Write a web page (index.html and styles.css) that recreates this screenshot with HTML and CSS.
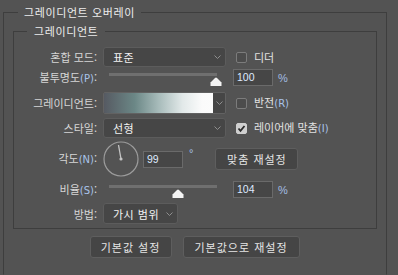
FILE: index.html
```html
<!DOCTYPE html>
<html lang="ko">
<head>
<meta charset="utf-8">
<link rel="stylesheet" href="styles.css">
</head>
<body>
<fieldset class="outer">
  <legend>그레이디언트 오버레이</legend>
  <fieldset class="inner">
    <legend>그레이디언트</legend>

    <div class="row r1">
      <span class="lbl">혼합 모드:</span>
      <div class="select w123"><span class="val">표준</span><svg class="chev" width="7" height="4" viewBox="0 0 7 4"><polyline points="0.5,0.5 3.5,3.5 6.5,0.5" fill="none" stroke="#8e8e8e" stroke-width="1"/></svg></div>
      <span class="check"></span><span class="opt">디더</span>
    </div>

    <div class="row r2">
      <span class="lbl">불투명도<span class="key">(P)</span>:</span>
      <div class="slider"><div class="track"></div><svg class="thumb t100" width="12" height="9" viewBox="0 0 12 9"><path d="M0.5 9 V5.5 L5 1 Q6 0 7 1 L11.5 5.5 V9 Z" fill="#f4f4f4"/></svg></div>
      <div class="num">100</div><span class="unit">%</span>
    </div>

    <div class="row r3">
      <span class="lbl">그레이디언트:</span>
      <div class="grad"><div class="swatch"></div><div class="gbtn"><svg class="chev" width="7" height="4" viewBox="0 0 7 4"><polyline points="0.5,0.5 3.5,3.5 6.5,0.5" fill="none" stroke="#8e8e8e" stroke-width="1"/></svg></div></div>
      <span class="check"></span><span class="opt">반전<span class="key">(R)</span></span>
    </div>

    <div class="row r4">
      <span class="lbl">스타일:</span>
      <div class="select w123"><span class="val">선형</span><svg class="chev" width="7" height="4" viewBox="0 0 7 4"><polyline points="0.5,0.5 3.5,3.5 6.5,0.5" fill="none" stroke="#8e8e8e" stroke-width="1"/></svg></div>
      <span class="check on"><svg width="9" height="9" viewBox="0 0 9 9"><polyline points="1.5,4.5 3.5,6.8 7.5,2" fill="none" stroke="#2a2a2a" stroke-width="1.8"/></svg></span><span class="opt">레이어에 맞춤<span class="key">(I)</span></span>
    </div>

    <div class="row r5">
      <span class="lbl">각도<span class="key">(N)</span>:</span>
      <svg class="dial" width="36" height="36" viewBox="0 0 36 36"><circle cx="18" cy="18" r="17" fill="none" stroke="#9c9c9c" stroke-width="1.2"/><line x1="18" y1="18" x2="15.5" y2="4" stroke="#c4c4c4" stroke-width="1.3"/><circle cx="18" cy="18" r="1.6" fill="#c4c4c4"/></svg>
      <div class="num n99">99</div><span class="deg">°</span>
      <button class="btn fit">맞춤 재설정</button>
    </div>

    <div class="row r6">
      <span class="lbl">비율<span class="key">(S)</span>:</span>
      <div class="slider"><div class="track"></div><svg class="thumb t104" width="12" height="9" viewBox="0 0 12 9"><path d="M0.5 9 V5.5 L5 1 Q6 0 7 1 L11.5 5.5 V9 Z" fill="#f4f4f4"/></svg></div>
      <div class="num">104</div><span class="unit">%</span>
    </div>

    <div class="row r7">
      <span class="lbl">방법:</span>
      <div class="select w75"><span class="val">가시 범위</span><svg class="chev" width="7" height="4" viewBox="0 0 7 4"><polyline points="0.5,0.5 3.5,3.5 6.5,0.5" fill="none" stroke="#8e8e8e" stroke-width="1"/></svg></div>
    </div>
  </fieldset>

  <div class="actions">
    <button class="btn b1">기본값 설정</button>
    <button class="btn b2">기본값으로 재설정</button>
  </div>
</fieldset>
</body>
</html>
```

FILE: styles.css
```css
* { box-sizing: border-box; }
html, body { margin: 0; padding: 0; }
body {
  background: #535353;
  width: 398px;
  height: 275px;
  overflow: hidden;
  font-family: "Noto Sans CJK KR", "Noto Sans", sans-serif;
  font-size: 11px;
  color: #d6d6d6;
}
fieldset { min-inline-size: 0; }
.outer {
  margin: 5px 0 0 3px;
  width: 384px;
  height: 270px;
  border: 1px solid #3e3e3e;
  border-bottom-color: transparent;
  padding: 0;
}
legend {
  padding: 0 6px;
  line-height: 14px;
  height: 14px;
  color: #ececec;
  letter-spacing: 0.6px;
}
.outer > legend { margin-left: 14px; }
.inner {
  margin: 5px 9px 0 9px;
  border: 1px solid #3e3e3e;
  padding: 9px 0 4px 0;
}
.inner > legend { margin-left: 13px; padding: 0 7px; }

.row { display: flex; align-items: center; }
.r1 { height: 20px; }
.r2 { height: 17px; margin-top: 2px; }
.r3 { height: 22px; margin-top: 6px; }
.r4 { height: 20px; margin-top: 4px; }
.r5 { height: 36px; margin-top: 3px; }
.r6 { height: 17px; margin-top: 4px; }
.r7 { height: 21px; margin-top: 5px; }

.lbl {
  width: 83px;
  margin-right: 6px;
  text-align: right;
  white-space: nowrap;
  line-height: 14px;
}
.key { color: #a9c3ea; font-family: "DejaVu Sans", sans-serif; font-size: 10px; }

.select {
  height: 100%;
  display: flex;
  align-items: center;
  justify-content: space-between;
  background: #464646;
  border: 1px solid #5c5c5c;
  border-radius: 3px;
  padding: 0 4px 0 9px;
  color: #f2f2f2;
}
.w123 { width: 123px; }
.w75 { width: 75px; }
.val { line-height: 14px; letter-spacing: 0.5px; }
.chev { display: block; flex: none; }

.check {
  width: 11px;
  height: 11px;
  margin-left: 10px;
  border: 1px solid #7c7c7c;
  border-radius: 2px;
  background: #4c4c4c;
  display: flex;
  align-items: center;
  justify-content: center;
  flex: none;
}
.check.on { background: #cfcfcf; border-color: #cfcfcf; }
.opt { margin-left: 7px; line-height: 14px; color: #e2e2e2; }

.slider { position: relative; width: 130px; height: 100%; }
.track {
  margin: 4px 0 0 6px;
  width: 108px;
  height: 3px;
  background: #6f6f6f;
}
.thumb { position: absolute; top: 8px; }
.t100 { left: 107px; }
.t104 { left: 69px; }

.num {
  width: 40px;
  height: 17px;
  background: #464646;
  border: 1px solid #6a6a6a;
  padding-left: 3px;
  font-family: "Liberation Sans", sans-serif;
  font-size: 10.5px;
  line-height: 15px;
  color: #dfeaff;
}
.unit {
  margin-left: 5px;
  color: #a3bde2;
  font-family: "Liberation Sans", sans-serif;
  font-size: 11px;
}

.grad {
  width: 123px;
  height: 100%;
  display: flex;
  border: 1px solid #626262;
  border-radius: 2px;
  overflow: hidden;
}
.swatch {
  width: 109px;
  height: 100%;
  background: linear-gradient(90deg, #565a62 0%, #6b8786 28%, #a7bbba 50%, #e2e9e9 72%, #fbfbfb 90%, #fcfcfc 100%);
}
.gbtn {
  flex: 1;
  background: #464646;
  display: flex;
  align-items: center;
  justify-content: center;
}

.dial { display: block; flex: none; }
.n99 { margin-left: 4px; }
.deg {
  align-self: flex-start;
  margin: 6px 0 0 6px;
  color: #a9c3ea;
  font-family: "Liberation Sans", sans-serif;
  font-size: 11px;
}

.btn {
  height: 22px;
  background: #454545;
  border: 1px solid #5e5e5e;
  border-radius: 3px;
  color: #e6e6e6;
  font-family: "Noto Sans CJK KR", "Noto Sans", sans-serif;
  font-size: 11px;
  padding: 0;
  line-height: 18px;
}
.fit { width: 83px; margin-left: 22px; letter-spacing: 1px; }
.actions {
  display: flex;
  justify-content: center;
  gap: 11px;
  margin-top: 7px;
  padding-right: 1px;
}
.b1 { width: 82px; letter-spacing: 1px; }
.b2 { width: 117px; letter-spacing: 1px; }
```
